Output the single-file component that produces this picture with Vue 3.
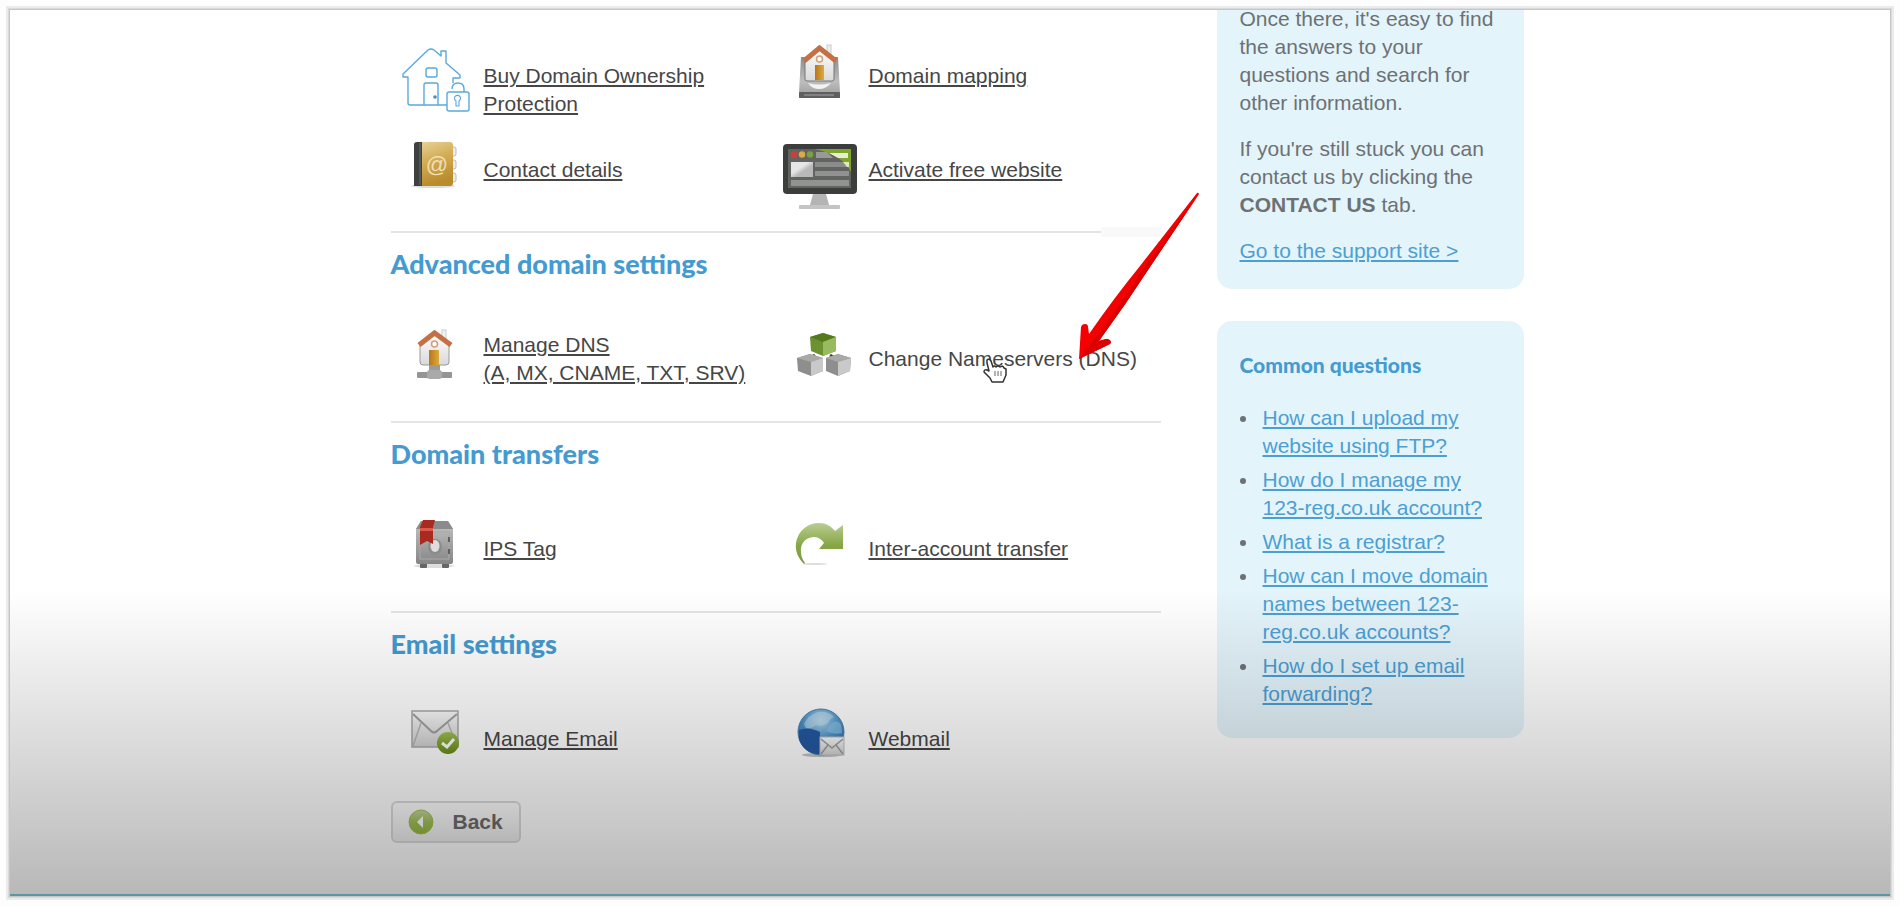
<script setup>
const questions = [
  "How can I upload my website using FTP?",
  "How do I manage my 123-reg.co.uk account?",
  "What is a registrar?",
  "How can I move domain names between 123-reg.co.uk accounts?",
  "How do I set up email forwarding?",
];

function goBack() {
  window.history.back();
}
</script>

<template>
  <div class="frame">
    <div class="layout">
      <main class="main">
        <section class="section section-first">
          <div class="items">
            <div class="item item-top">
              <svg class="icon" viewBox="0 0 86 80" aria-hidden="true">
                <g fill="none" stroke="#5aa9dc" stroke-width="1.4" stroke-linejoin="round">
                  <path
                    d="M62 47V42H69V39L55 27V15H50V20L43 14Q40 12 37 14L12 38V41H17V67Q17 69 19 69H56"
                  />
                  <rect x="35" y="32" width="11" height="9" rx="2" />
                  <path d="M33 69V49Q33 47 35 47H45Q47 47 47 49V69" />
                  <rect x="56" y="56" width="22" height="19" rx="2" />
                  <path d="M61 53Q61 47 67 47Q73 47 73 53V56" />
                  <path d="M65 70V65A3 3 0 1 1 68 65V70Z" stroke-width="1.1" />
                </g>
                <circle cx="44" cy="61" r="1.8" fill="#3f8fc8" />
              </svg>
              <a href="#" class="label">Buy Domain Ownership<br />Protection</a>
            </div>
            <div class="item item-top">
              <svg class="icon" viewBox="0 0 86 80" aria-hidden="true">
                <defs>
                  <linearGradient id="drive" x1="0" y1="0" x2="0" y2="1">
                    <stop offset="0" stop-color="#8d8d8d" />
                    <stop offset="0.6" stop-color="#bdbdbd" />
                    <stop offset="1" stop-color="#9a9a9a" />
                  </linearGradient>
                  <linearGradient id="wall" x1="0" y1="0" x2="0" y2="1">
                    <stop offset="0" stop-color="#fff" />
                    <stop offset="1" stop-color="#d9d9d9" />
                  </linearGradient>
                  <linearGradient id="door" x1="0" y1="0" x2="1" y2="0">
                    <stop offset="0" stop-color="#b9751c" />
                    <stop offset="1" stop-color="#dcab3a" />
                  </linearGradient>
                </defs>
                <path d="M25 21H62L64 56V62H23V56Z" fill="url(#drive)" />
                <rect x="23" y="56" width="41" height="6" rx="1" fill="#5e5e5e" />
                <path d="M28 59H58" stroke="#8e8e8e" stroke-width="1.5" />
                <path d="M32 47Q43 50 55 47Q50 53 43 53Q36 53 32 47Z" fill="#f2f2f2" />
                <rect x="51" y="9" width="4" height="10" fill="#eee" stroke="#ccc" />
                <path d="M29 24L43 11L58 24V43Q58 45 56 45H31Q29 45 29 43Z" fill="url(#wall)" stroke="#777" />
                <rect x="39" y="29" width="9" height="15" fill="url(#door)" />
                <circle cx="43.5" cy="23" r="3" fill="#fff" stroke="#d49d79" stroke-width="1.5" />
                <path d="M28 25L43.5 12L60 25" fill="none" stroke="#c56f45" stroke-width="5" />
              </svg>
              <a href="#" class="label">Domain mapping</a>
            </div>
            <div class="item">
              <svg class="icon" viewBox="0 0 86 80" aria-hidden="true">
                <defs>
                  <linearGradient id="book" x1="0" y1="0" x2="0.3" y2="1">
                    <stop offset="0" stop-color="#ead49c" />
                    <stop offset="0.5" stop-color="#d2ad55" />
                    <stop offset="1" stop-color="#b98c2e" />
                  </linearGradient>
                </defs>
                <ellipse cx="42" cy="56" rx="22" ry="2" fill="#ddd" />
                <g fill="#eee" stroke="#bbb">
                  <rect x="59" y="17" width="6" height="9" rx="2" />
                  <rect x="59" y="30" width="6" height="9" rx="2" />
                  <rect x="59" y="43" width="6" height="9" rx="2" />
                </g>
                <rect x="23" y="12" width="39" height="44" rx="3" fill="url(#book)" />
                <path d="M26 12H31V56H23V15Q23 12 26 12Z" fill="#3d4240" />
                <path d="M29 13V55" stroke="#6a6d69" />
                <text x="46" y="42" class="at-sign">@</text>
              </svg>
              <a href="#" class="label">Contact details</a>
            </div>
            <div class="item">
              <svg class="icon" viewBox="0 0 86 80" aria-hidden="true">
                <defs>
                  <linearGradient id="pane" x1="0" y1="0" x2="1" y2="1">
                    <stop offset="0.4" stop-color="#e6e6e6" />
                    <stop offset="0.6" stop-color="#b9b9b9" />
                  </linearGradient>
                </defs>
                <path d="M37 64H50L53 75H34Z" fill="#b4b4b4" />
                <rect x="23" y="75" width="41" height="4" rx="1" fill="#c4c4c4" />
                <rect x="7" y="14" width="74" height="50" rx="4" fill="#3b3e3b" />
                <rect x="12" y="19" width="63" height="39" fill="#626462" />
                <path d="M38 19H75V42Q66 24 38 19Z" fill="#7fa62b" />
                <circle cx="18" cy="24.5" r="3.5" fill="#c9413b" />
                <circle cx="26" cy="24.5" r="3.2" fill="#dbaa43" />
                <circle cx="34" cy="24.5" r="3.2" fill="#7da13c" />
                <path d="M40 22H51L57 28H40Z" fill="#999" />
                <path d="M53 23H72V28H62Z" fill="#e7edd3" />
                <rect x="15" y="32" width="22" height="15" fill="url(#pane)" />
                <rect x="39" y="32" width="34" height="5" fill="#8b8b8b" />
                <path d="M67 32H73V37H71Z" fill="#dfe8c0" />
                <rect x="39" y="41" width="34" height="5" fill="#919191" />
                <rect x="15" y="50" width="58" height="6" fill="#929292" />
              </svg>
              <a href="#" class="label">Activate free website</a>
            </div>
          </div>
        </section>

        <section class="section section-advanced">
          <h2>Advanced domain settings</h2>
          <div class="items">
            <div class="item">
              <svg class="icon" viewBox="0 0 86 80" aria-hidden="true">
                <rect x="51" y="11" width="4" height="10" fill="#f2f2f2" stroke="#ccc" />
                <rect x="38" y="46" width="11" height="8" fill="#9b9b9b" />
                <rect x="26" y="53" width="35" height="6" rx="1" fill="#959595" />
                <rect x="36" y="51" width="15" height="9" rx="3" fill="#a9a9a9" />
                <path d="M29 26L43 14L58 26V43Q58 46 55 46H32Q29 46 29 43Z" fill="url(#wall)" stroke="#9a9a9a" />
                <rect x="38" y="31" width="10" height="15" fill="url(#door)" />
                <circle cx="43.5" cy="25" r="3" fill="#fff" stroke="#d49d79" stroke-width="1.5" />
                <path d="M28 26L43.5 14L60 26" fill="none" stroke="#c56f45" stroke-width="5" />
              </svg>
              <a href="#" class="label">Manage DNS<br />(A, MX, CNAME, TXT, SRV)</a>
            </div>
            <div class="item">
              <svg class="icon" viewBox="0 0 86 80" aria-hidden="true">
                <path d="M39 36L34 40M54 36L60 40" stroke="#444" stroke-width="3" />
                <path d="M34 18L47 14L60 18V32L47 37L35 32Z" fill="#6c9130" />
                <path d="M34 18L47 14L60 18L47 23Z" fill="#55791c" />
                <path d="M47 23L60 18V32L47 37Z" fill="#9aba62" />
                <path d="M21 39L34 35L47 39V52L35 57L22 52Z" fill="#8e8e8e" />
                <path d="M21 39L34 35L47 39L35 43Z" fill="#a9a9a9" />
                <path d="M35 43L47 39V52L35 57Z" fill="#c9c9c9" />
                <path d="M50 39L62 35L75 39L74 52L62 57L50 52Z" fill="#8e8e8e" />
                <path d="M50 39L62 35L75 39L62 43Z" fill="#a9a9a9" />
                <path d="M62 43L75 39L74 52L62 57Z" fill="#c9c9c9" />
              </svg>
              <a href="#" class="label label-hover">Change Nameservers (DNS)</a>
            </div>
          </div>
        </section>

        <section class="section">
          <h2>Domain transfers</h2>
          <div class="items">
            <div class="item">
              <svg class="icon" viewBox="0 0 86 80" aria-hidden="true">
                <defs>
                  <linearGradient id="safe" x1="0" y1="0" x2="0" y2="1">
                    <stop offset="0" stop-color="#c4c4c4" />
                    <stop offset="1" stop-color="#858585" />
                  </linearGradient>
                </defs>
                <ellipse cx="43" cy="57" rx="20" ry="2" fill="#ddd" />
                <rect x="29" y="54" width="7" height="5" rx="1" fill="#666" />
                <rect x="51" y="54" width="7" height="5" rx="1" fill="#666" />
                <path d="M30 12H57L62 20V53Q62 55 60 55H27Q25 55 25 53V20Z" fill="url(#safe)" />
                <path d="M30 12H57L62 20H25Z" fill="#8b8b8b" />
                <rect x="29" y="23" width="29" height="27" fill="none" stroke="#aaa" />
                <path d="M58 28V33M58 40V45" stroke="#606060" stroke-width="2" />
                <ellipse cx="44" cy="38" rx="7" ry="8" fill="#8c8c8c" />
                <ellipse cx="44" cy="37" rx="4.5" ry="6" fill="#dedede" />
                <path d="M32 11H44L42 18V35L36 32L29 36V18Z" fill="#a92b20" />
                <path d="M29 19H42V22H29Z" fill="#dd5a4b" />
              </svg>
              <a href="#" class="label">IPS Tag</a>
            </div>
            <div class="item">
              <svg class="icon" viewBox="0 0 86 80" aria-hidden="true">
                <defs>
                  <linearGradient id="turn" x1="0" y1="0" x2="0" y2="1">
                    <stop offset="0" stop-color="#b9cd92" />
                    <stop offset="0.55" stop-color="#86a644" />
                    <stop offset="1" stop-color="#7f9a4b" />
                  </linearGradient>
                </defs>
                <ellipse cx="39" cy="55" rx="12" ry="1" fill="#ddd" />
                <path
                  d="M28 55C22 49 19 42 20 34C22 21 32 14 43 14C50 14 55 17 59 22L67 16V40H43L48 34C45 29 41 28 37 28C28 29 24 36 25 43C25 48 27 51 29 54Z"
                  fill="url(#turn)"
                />
              </svg>
              <a href="#" class="label">Inter-account transfer</a>
            </div>
          </div>
        </section>

        <section class="section">
          <h2>Email settings</h2>
          <div class="items">
            <div class="item">
              <svg class="icon" viewBox="0 0 86 80" aria-hidden="true">
                <defs>
                  <linearGradient id="paper" x1="0" y1="0" x2="0" y2="1">
                    <stop offset="0" stop-color="#fafafa" />
                    <stop offset="1" stop-color="#cfcfcf" />
                  </linearGradient>
                  <linearGradient id="tick" x1="0" y1="0" x2="0" y2="1">
                    <stop offset="0" stop-color="#9fbf52" />
                    <stop offset="1" stop-color="#678a16" />
                  </linearGradient>
                </defs>
                <rect x="21" y="12" width="46" height="36" fill="url(#paper)" stroke="#a8a8a8" stroke-width="1.5" />
                <path d="M22 47L30 24M66 47L57 24" stroke="#b5b5b5" stroke-width="1.5" />
                <path d="M22 15L40 32Q43 35 46 32L66 15" fill="none" stroke="#a0a0a0" stroke-width="2" />
                <circle cx="57" cy="44" r="11" fill="url(#tick)" />
                <path d="M51 44L56 48L63 40" fill="none" stroke="#fff" stroke-width="3" />
              </svg>
              <a href="#" class="label">Manage Email</a>
            </div>
            <div class="item">
              <svg class="icon" viewBox="0 0 86 80" aria-hidden="true">
                <defs>
                  <radialGradient id="globe" cx="0.5" cy="0.25" r="0.75">
                    <stop offset="0" stop-color="#b5d8ee" />
                    <stop offset="0.5" stop-color="#4f97cc" />
                    <stop offset="1" stop-color="#2460a8" />
                  </radialGradient>
                </defs>
                <ellipse cx="46" cy="56" rx="20" ry="2" fill="#c2c2c2" />
                <circle cx="45" cy="33" r="23" fill="url(#globe)" stroke="#4a7fae" />
                <path d="M23 31Q32 27 44 33V55Q28 55 23 40Z" fill="#2458a0" />
                <path d="M28 25Q32 16 42 13Q52 12 58 18Q54 19 52 24Q46 28 40 26Q36 30 30 29Z" fill="#c3dff0" opacity="0.6" />
                <path d="M56 24Q62 20 65 26L66 34Q58 36 50 32Q52 28 56 24Z" fill="#8cc2e4" opacity="0.7" />
                <rect x="44" y="38" width="24" height="18" fill="url(#paper)" stroke="#bbb" />
                <path d="M45 40L56 49L67 40M45 55L52 46M67 55L60 46" fill="none" stroke="#9a9a9a" stroke-width="1.5" />
              </svg>
              <a href="#" class="label">Webmail</a>
            </div>
          </div>
        </section>

        <button type="button" class="back" @click="goBack">
          <svg class="back-icon" viewBox="0 0 26 26" aria-hidden="true">
            <defs>
              <linearGradient id="round" x1="0" y1="0" x2="0" y2="1">
                <stop offset="0" stop-color="#c5d69b" />
                <stop offset="0.5" stop-color="#a1bf5b" />
                <stop offset="1" stop-color="#93b83b" />
              </linearGradient>
            </defs>
            <circle cx="13" cy="13" r="12" fill="url(#round)" stroke="#a3c254" />
            <path d="M15 7V19L9 13Z" fill="#fff" />
          </svg>
          Back
        </button>

        <svg class="hand" viewBox="0 0 24 26" aria-hidden="true">
          <path
            d="M4 2Q6 0 8 3L10 9Q11 7 13 9Q15 7 17 9Q20 7 21 10L23 11V17L20 24H9L7 20L1 14Q1 11 4 12L6 13L4 5Z"
            fill="#fff"
            stroke="#333"
            stroke-width="1.5"
            stroke-linejoin="round"
          />
          <path d="M12 13V18M15 13V18M18 13V18" stroke="#666" />
        </svg>
        <svg class="arrow" viewBox="0 0 126 172" aria-hidden="true">
          <path
            d="M121 3Q122 2 123 4L74 77Q50 114 23 151L30 149Q34 149 35 152Q35 154 32 155L3 169L5 137Q6 134 9 134Q12 134 12 137L13 144Q38 108 64 76Z"
            fill="#f40000"
          />
          <path d="M123 4L74 77Q50 114 23 151L30 149Q34 149 35 152Q35 154 32 155L3 169Q40 122 69 76Z" fill="#dc0000" />
        </svg>
      </main>

      <aside class="sidebar">
        <div class="card card-support">
          <p>Once there, it's easy to find the answers to your questions and search for other information.</p>
          <p>If you're still stuck you can contact us by clicking the <strong>CONTACT US</strong> tab.</p>
          <p><a href="#">Go to the support site &gt;</a></p>
        </div>
        <div class="card card-questions">
          <h3>Common questions</h3>
          <ul>
            <li v-for="question in questions" :key="question">
              <a href="#">{{ question }}</a>
            </li>
          </ul>
        </div>
      </aside>
    </div>
  </div>
</template>

<style>
body {
  margin: 0;
  background: #fdfdfd;
}
#app {
  display: flow-root;
}
</style>

<style scoped>
.frame {
  position: relative;
  box-sizing: border-box;
  min-height: calc(100vh - 20px);
  margin: 10px;
  background: #fff;
  border-bottom: 2px solid #5b96a5;
  box-shadow:
    0 0 0 1px #c6c6c6,
    0 0 0 2px #dadada,
    0 0 0 4px #ebebeb;
  font-family: "Liberation Sans", Arial, sans-serif;
  font-size: 21px;
  line-height: 28px;
  color: #6d7174;
}
/* dark fade over the lower third */
.frame::after {
  content: "";
  position: absolute;
  inset: auto 0 0;
  height: 304px;
  background: linear-gradient(rgba(0, 0, 0, 0), rgba(0, 0, 0, 0.28));
  pointer-events: none;
}
.layout {
  display: flex;
  gap: 56px;
  box-sizing: border-box;
  max-width: 1147px;
  margin: 0 auto;
  padding-left: 14px;
}
.main {
  position: relative;
  flex: 1;
  min-width: 0;
  padding-bottom: 48px;
}
.section {
  padding: 14px 0 22px;
  border-top: 2px solid #e4e4e4;
}
.section-first {
  padding: 26px 0 21px;
  border-top: none;
}
.section-advanced {
  position: relative;
}
.section-advanced::before {
  content: "";
  position: absolute;
  top: -6px;
  right: 0;
  width: 60px;
  height: 10px;
  background: #f9f9f9;
}
h2,
h3 {
  margin: 0;
  font-family: Lato, "Liberation Sans", sans-serif;
  font-weight: 900;
  color: #449bd1;
}
h2 {
  margin-bottom: 38px;
  font-size: 27px;
  line-height: 34px;
}
h3 {
  margin-bottom: 25px;
  font-size: 21px;
  line-height: 28px;
}
.items {
  display: grid;
  grid-template-columns: 1fr 1fr;
  gap: 12px 0;
}
.item {
  display: flex;
  align-items: center;
  gap: 7px;
}
.item-top {
  align-items: flex-start;
}
.item-top .label {
  padding-top: 26px;
}
.icon {
  flex: none;
  width: 86px;
  height: 80px;
}
.at-sign {
  font-size: 22px;
  text-anchor: middle;
  fill: #f0dfb4;
}
.label {
  color: #464646;
  white-space: nowrap;
}
.label-hover {
  text-decoration: none;
}
.back {
  display: flex;
  align-items: center;
  gap: 19px;
  height: 42px;
  padding: 0 16px 0 15px;
  border: 2px solid #dadada;
  border-radius: 6px;
  background: linear-gradient(#fff, #ededed);
  font: bold 21px/28px "Liberation Sans", Arial, sans-serif;
  color: #6c6c6c;
  cursor: pointer;
}
.back-icon {
  width: 26px;
  height: 26px;
}
.hand {
  position: absolute;
  left: 592px;
  top: 348px;
  width: 24px;
  height: 26px;
}
.arrow {
  position: absolute;
  left: 685px;
  top: 180px;
  width: 126px;
  height: 172px;
  z-index: 1;
}
.sidebar {
  flex: none;
  width: 307px;
}
.card {
  box-sizing: border-box;
  padding: 30px 21px 30px 23px;
  border-radius: 15px;
  background: #e4f4fb;
}
.card-support {
  margin-bottom: 32px;
  padding-top: 0;
  padding-bottom: 24px;
  border-radius: 0 0 15px 15px;
}
.card-support p {
  margin: 0 0 18px;
}
/* the opening paragraph rides up against the top edge */
.card-support p:first-child {
  margin-top: -5px;
}
.card-support p:last-child {
  margin-bottom: 0;
}
.card-support {
  display: flow-root;
}
.card a {
  color: #4c9fd3;
}
ul {
  display: flex;
  flex-direction: column;
  gap: 6px;
  margin: 0;
  padding: 0;
  list-style: none;
}
li {
  display: flex;
  gap: 17px;
}
li::before {
  content: "";
  flex: none;
  width: 6px;
  height: 6px;
  margin-top: 12px;
  border-radius: 50%;
  background: #6d7174;
}
</style>
